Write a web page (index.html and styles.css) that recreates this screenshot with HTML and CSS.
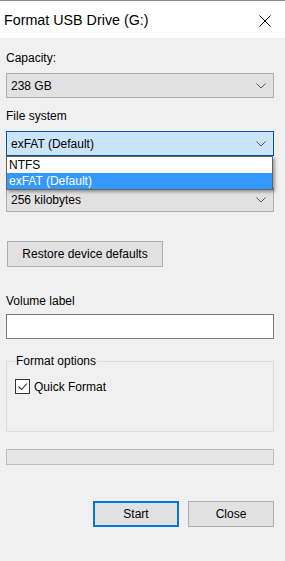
FILE: index.html
```html
<!DOCTYPE html>
<html>
<head>
<meta charset="utf-8">
<link rel="stylesheet" href="styles.css">
</head>
<body>
<div class="window">
  <div class="titlebar">
    <span class="title">Format USB Drive (G:)</span>
    <svg class="close" width="12" height="12" viewBox="0 0 12 12"><path d="M0.5 0.5 L11.5 11.5 M11.5 0.5 L0.5 11.5" stroke="#000" stroke-width="1" fill="none"/></svg>
  </div>
  <div class="content">
    <div class="label first">Capacity:</div>
    <div class="select">
      <span>238 GB</span>
      <svg class="chev" width="10" height="6" viewBox="0 0 10 6"><polyline points="0.5,0.5 5,5 9.5,0.5" stroke="#555" fill="none" stroke-width="1"/></svg>
    </div>
    <div class="label">File system</div>
    <div class="dropwrap">
      <div class="select active">
        <span>exFAT (Default)</span>
        <svg class="chev" width="10" height="6" viewBox="0 0 10 6"><polyline points="0.5,0.5 5,5 9.5,0.5" stroke="#555" fill="none" stroke-width="1"/></svg>
      </div>
      <div class="select alloc">
        <span>256 kilobytes</span>
        <svg class="chev" width="10" height="6" viewBox="0 0 10 6"><polyline points="0.5,0.5 5,5 9.5,0.5" stroke="#555" fill="none" stroke-width="1"/></svg>
      </div>
      <div class="droplist">
        <div class="opt">NTFS</div>
        <div class="opt sel">exFAT (Default)</div>
      </div>
    </div>
    <div class="btn restore">Restore device defaults</div>
    <div class="label vol">Volume label</div>
    <div class="input"></div>
    <fieldset class="group">
      <legend>Format options</legend>
      <div class="check">
        <span class="box"><svg width="13" height="13" viewBox="0 0 13 13"><polyline points="2.5,6.5 5.5,9.5 11,3.5" stroke="#333" fill="none" stroke-width="1.1"/></svg></span>
        <span>Quick Format</span>
      </div>
    </fieldset>
    <div class="progress"></div>
    <div class="actions">
      <div class="btn start">Start</div>
      <div class="btn">Close</div>
    </div>
  </div>
</div>
</body>
</html>
```
FILE: styles.css
```css
html, body {
  margin: 0;
  padding: 0;
  background: #f0f0f0;
}
body {
  font-family: "Liberation Sans", Arial, sans-serif;
  font-size: 12px;
  color: #000;
  width: 285px;
  height: 561px;
  overflow: hidden;
}
.window {
  height: 561px;
  background: #f0f0f0;
}
.titlebar {
  height: 37px;
  background: #fff;
  border-top: 1px solid #8c8c8c;
  display: flex;
  align-items: center;
  justify-content: space-between;
  padding: 0 14px 0 4px;
}
.title {
  font-size: 14.3px;
  color: #000;
  margin-top: 1px;
}
.close {
  display: block;
  margin-top: 2px;
}
.content {
  padding: 0 11px 0 6px;
  display: flex;
  flex-direction: column;
}
.label {
  height: 15px;
  line-height: 15px;
  margin-top: 11px;
  margin-bottom: 7px;
}
.label.first {
  margin-top: 13px;
}
.select {
  height: 23px;
  border: 1px solid #adadad;
  background: #e1e1e1;
  display: flex;
  align-items: center;
  justify-content: space-between;
  padding: 0 7px 0 4px;
}
.select.active {
  background: #cce4f7;
  border-color: #005499;
}
.dropwrap {
  position: relative;
  display: flex;
  flex-direction: column;
}
.select.alloc {
  margin-top: 31px;
}
.droplist {
  position: absolute;
  left: 0;
  right: 1px;
  top: 25px;
  border: 1px solid #646464;
  background: #fff;
  box-shadow: 2px 2px 3px rgba(0, 0, 0, 0.35);
}
.opt {
  height: 16px;
  line-height: 16px;
  padding-left: 2px;
}
.opt.sel {
  background: #3399ff;
  color: #fff;
}
.btn {
  height: 24px;
  border: 1px solid #adadad;
  background: #e1e1e1;
  display: flex;
  align-items: center;
  justify-content: center;
}
.restore {
  width: 154px;
  margin-left: 1px;
  margin-top: 29px;
}
.label.vol {
  margin-top: 27px;
  margin-bottom: 5px;
}
.input {
  height: 23px;
  border: 1px solid #7a7a7a;
  background: #fff;
}
.group {
  margin: 15px 0 0 0;
  padding: 10px 8px 0 8px;
  height: 66px;
  border: 1px solid #dcdcdc;
  box-sizing: content-box;
}
.group legend {
  padding: 0 1px;
  margin-left: 0;
  line-height: 15px;
}
.check {
  display: flex;
  align-items: center;
  gap: 4px;
}
.box {
  width: 13px;
  height: 13px;
  border: 1px solid #333;
  background: #fff;
  display: block;
}
.box svg {
  display: block;
}
.progress {
  height: 14px;
  border: 1px solid #bcbcbc;
  background: #e6e6e6;
  margin-top: 17px;
}
.actions {
  display: flex;
  justify-content: flex-end;
  gap: 9px;
  margin-top: 36px;
}
.actions .btn {
  width: 84px;
}
.actions .btn.start {
  border: 2px solid #0078d7;
  height: 22px;
  width: 82px;
}
```
